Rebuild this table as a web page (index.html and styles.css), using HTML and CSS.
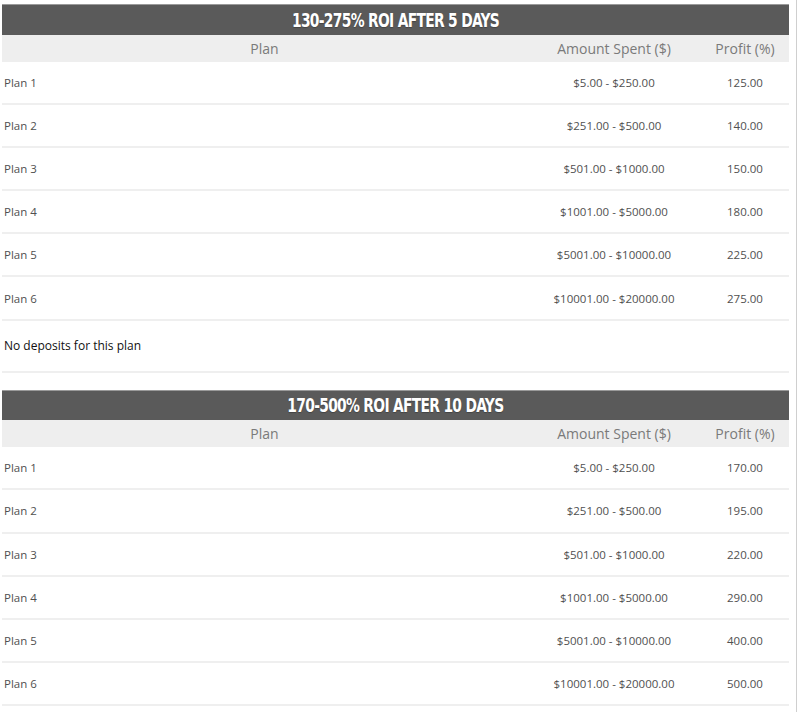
FILE: index.html
```html
<!DOCTYPE html>
<html>
<head>
<meta charset="utf-8">
<title>Plans</title>
<link rel="stylesheet" href="styles.css">
</head>
<body>
<div class="page">
  <table class="plan-table">
    <colgroup><col class="c-plan"><col class="c-amount"><col class="c-profit"></colgroup>
    <thead>
      <tr><th colspan="3" class="title"><span class="title-text">130-275% ROI AFTER 5 DAYS</span></th></tr>
      <tr class="colhead"><th>Plan</th><th>Amount Spent ($)</th><th>Profit (%)</th></tr>
    </thead>
    <tbody>
      <tr><td class="name">Plan 1</td><td class="num">$5.00 - $250.00</td><td class="num">125.00</td></tr>
      <tr><td class="name">Plan 2</td><td class="num">$251.00 - $500.00</td><td class="num">140.00</td></tr>
      <tr><td class="name">Plan 3</td><td class="num">$501.00 - $1000.00</td><td class="num">150.00</td></tr>
      <tr><td class="name">Plan 4</td><td class="num">$1001.00 - $5000.00</td><td class="num">180.00</td></tr>
      <tr><td class="name">Plan 5</td><td class="num">$5001.00 - $10000.00</td><td class="num">225.00</td></tr>
      <tr><td class="name">Plan 6</td><td class="num">$10001.00 - $20000.00</td><td class="num">275.00</td></tr>
      <tr class="empty"><td colspan="3">No deposits for this plan</td></tr>
    </tbody>
  </table>

  <table class="plan-table second">
    <colgroup><col class="c-plan"><col class="c-amount"><col class="c-profit"></colgroup>
    <thead>
      <tr><th colspan="3" class="title"><span class="title-text">170-500% ROI AFTER 10 DAYS</span></th></tr>
      <tr class="colhead"><th>Plan</th><th>Amount Spent ($)</th><th>Profit (%)</th></tr>
    </thead>
    <tbody>
      <tr><td class="name">Plan 1</td><td class="num">$5.00 - $250.00</td><td class="num">170.00</td></tr>
      <tr><td class="name">Plan 2</td><td class="num">$251.00 - $500.00</td><td class="num">195.00</td></tr>
      <tr><td class="name">Plan 3</td><td class="num">$501.00 - $1000.00</td><td class="num">220.00</td></tr>
      <tr><td class="name">Plan 4</td><td class="num">$1001.00 - $5000.00</td><td class="num">290.00</td></tr>
      <tr><td class="name">Plan 5</td><td class="num">$5001.00 - $10000.00</td><td class="num">400.00</td></tr>
      <tr><td class="name">Plan 6</td><td class="num">$10001.00 - $20000.00</td><td class="num">500.00</td></tr>
    </tbody>
  </table>
</div>
</body>
</html>
```

FILE: styles.css
```css
html, body {
  margin: 0;
  padding: 0;
  background: #ffffff;
}
.page {
  width: 797px;
  min-height: 712px;
  box-sizing: border-box;
  border-right: 1px solid #cfcfcf;
  padding: 4px 0 0 2px;
  font-family: "Open Sans", "Liberation Sans", sans-serif;
}
.plan-table {
  width: 787px;
  border-collapse: collapse;
  table-layout: fixed;
}
.plan-table.second {
  margin-top: 17px;
}
.c-plan { width: 525px; }
.c-amount { width: 174px; }
.c-profit { width: 88px; }
.title {
  height: 30px;
  box-sizing: border-box;
  padding: 0;
  background: #5a5a5a;
  border-top: 1px solid #9a9a9a;
  color: #ffffff;
  font-weight: bold;
  text-align: center;
  vertical-align: middle;
}
.title-text {
  display: inline-block;
  font-family: "DejaVu Sans Condensed", "DejaVu Sans", sans-serif;
  font-weight: bold;
  font-size: 20px;
  line-height: 24px;
  letter-spacing: -0.9px;
  transform: scaleX(0.77);
  text-shadow: 0 1px 1px rgba(0, 0, 0, 0.25);
}
.colhead th {
  height: 27px;
  padding: 0;
  background: #eeeeee;
  color: #7a7a7a;
  font-weight: normal;
  font-size: 14px;
  text-align: center;
  vertical-align: middle;
}
td {
  height: 41.2px;
  padding: 0;
  border-bottom: 2px solid #efefef;
  font-size: 11.5px;
  color: #505050;
  vertical-align: middle;
}
td.name {
  padding-left: 2px;
  text-align: left;
}
td.num {
  text-align: center;
}
.empty td {
  height: 50px;
  padding-left: 2px;
  font-size: 12px;
  color: #111111;
}
```
